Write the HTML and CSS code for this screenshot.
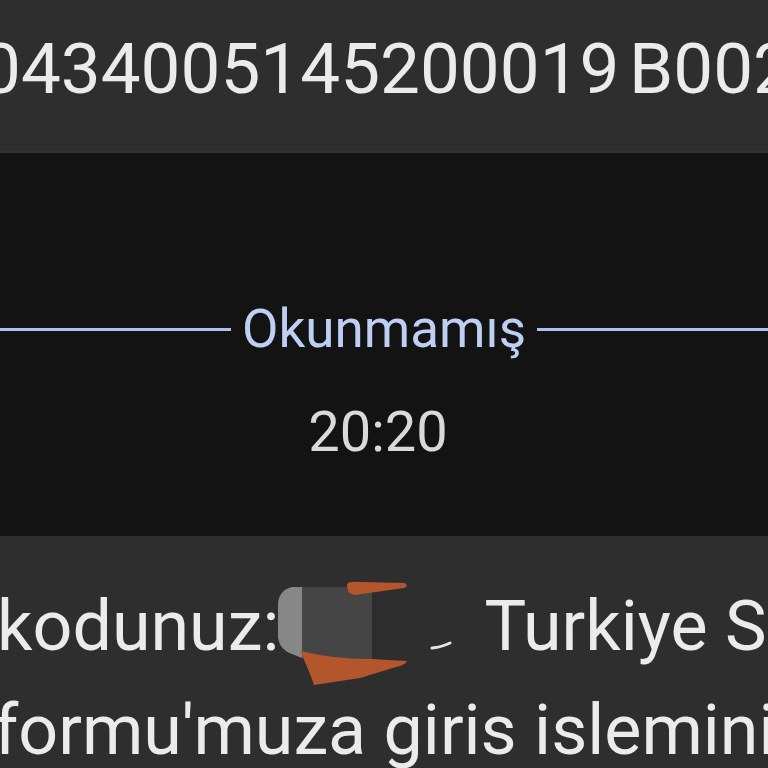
FILE: index.html
```html
<!DOCTYPE html>
<html lang="tr">
<head>
<meta charset="utf-8">
<title>Mesajlar</title>
<link rel="stylesheet" href="styles.css">
</head>
<body>
<div class="screen">
  <section class="bubble bubble-top">
    <div class="msg-line top-line">0434005145200019 B002</div>
  </section>
  <section class="divider-area">
    <div class="divider">
      <span class="rule"></span>
      <span class="divider-label">Okunmamış</span>
      <span class="rule"></span>
    </div>
    <div class="time">20:20</div>
  </section>
  <section class="bubble bubble-bottom">
    <div class="msg-line line-1"><span>kodunuz:</span><span class="code-gap"></span><span>Turkiye ST</span></div>
    <div class="msg-line line-2">tformu'muza giris islemini</div>
    <svg class="redact" viewBox="0 538 768 230" width="768" height="230" aria-hidden="true">
      <rect x="372" y="592" width="36" height="64" fill="#2a2a2a" opacity="0.3"/>
      <path d="M302 589 L292 589 Q279 592 278 606 L278 640 Q280 652 292 656 L302 660 Z" fill="#878787"/>
      <rect x="302" y="589" width="70" height="72" fill="#454545"/>
      <path d="M347 586 Q350 583 360 584 L405 585 Q409 588 404 590 L355 597 Q346 596 347 586 Z" fill="#b4562b"/>
      <path d="M300 653 Q340 662 372 661 L407 663 Q405 667 396 669 L360 680 L314 687 Q309 672 300 653 Z" fill="#b4562b"/>
      <path d="M432 650 Q442 649 450 645" stroke="#e6e6e6" stroke-width="3" fill="none" stroke-linecap="round"/>
    </svg>
  </section>
</div>
</body>
</html>
```
FILE: styles.css
```css
html, body {
  margin: 0;
  padding: 0;
  background: #131313;
}

body {
  width: 768px;
  height: 768px;
  overflow: hidden;
  font-family: Roboto, "Noto Sans", "Liberation Sans", sans-serif;
}

.screen {
  display: flex;
  flex-direction: column;
  width: 768px;
  height: 768px;
  overflow: hidden;
}

.bubble {
  background: #2e2e2e;
  color: #ebebeb;
  overflow: hidden;
}

.bubble-top {
  height: 153px;
  padding-top: 27px;
  box-sizing: border-box;
  border-bottom: 2px solid #333333;
}

.msg-line {
  white-space: nowrap;
}

.top-line {
  font-size: 71px;
  line-height: normal;
  margin-left: -19px;
  word-spacing: -8px;
}

.divider-area {
  height: 383px;
  box-sizing: border-box;
  padding-top: 145px;
  display: flex;
  flex-direction: column;
  align-items: stretch;
  gap: 39px;
  background: #131313;
}

.divider {
  display: flex;
  align-items: center;
  gap: 11px;
  height: 62px;
}

.rule {
  flex: 1;
  height: 3px;
  background: #aec3ea;
}

.divider-label {
  font-size: 53px;
  line-height: normal;
  color: #bdcff2;
}

.time {
  font-size: 56px;
  line-height: normal;
  color: #d9d9d9;
  text-align: center;
  padding-right: 12px;
}

.bubble-bottom {
  position: relative;
  flex: 1;
  padding-top: 38px;
  font-size: 70px;
  line-height: 104px;
}

.line-1 {
  margin-left: -3px;
}

.code-gap {
  display: inline-block;
  width: 205px;
}

.line-2 {
  margin-left: -29px;
}

.redact {
  position: absolute;
  left: 0;
  top: 0;
}
```
